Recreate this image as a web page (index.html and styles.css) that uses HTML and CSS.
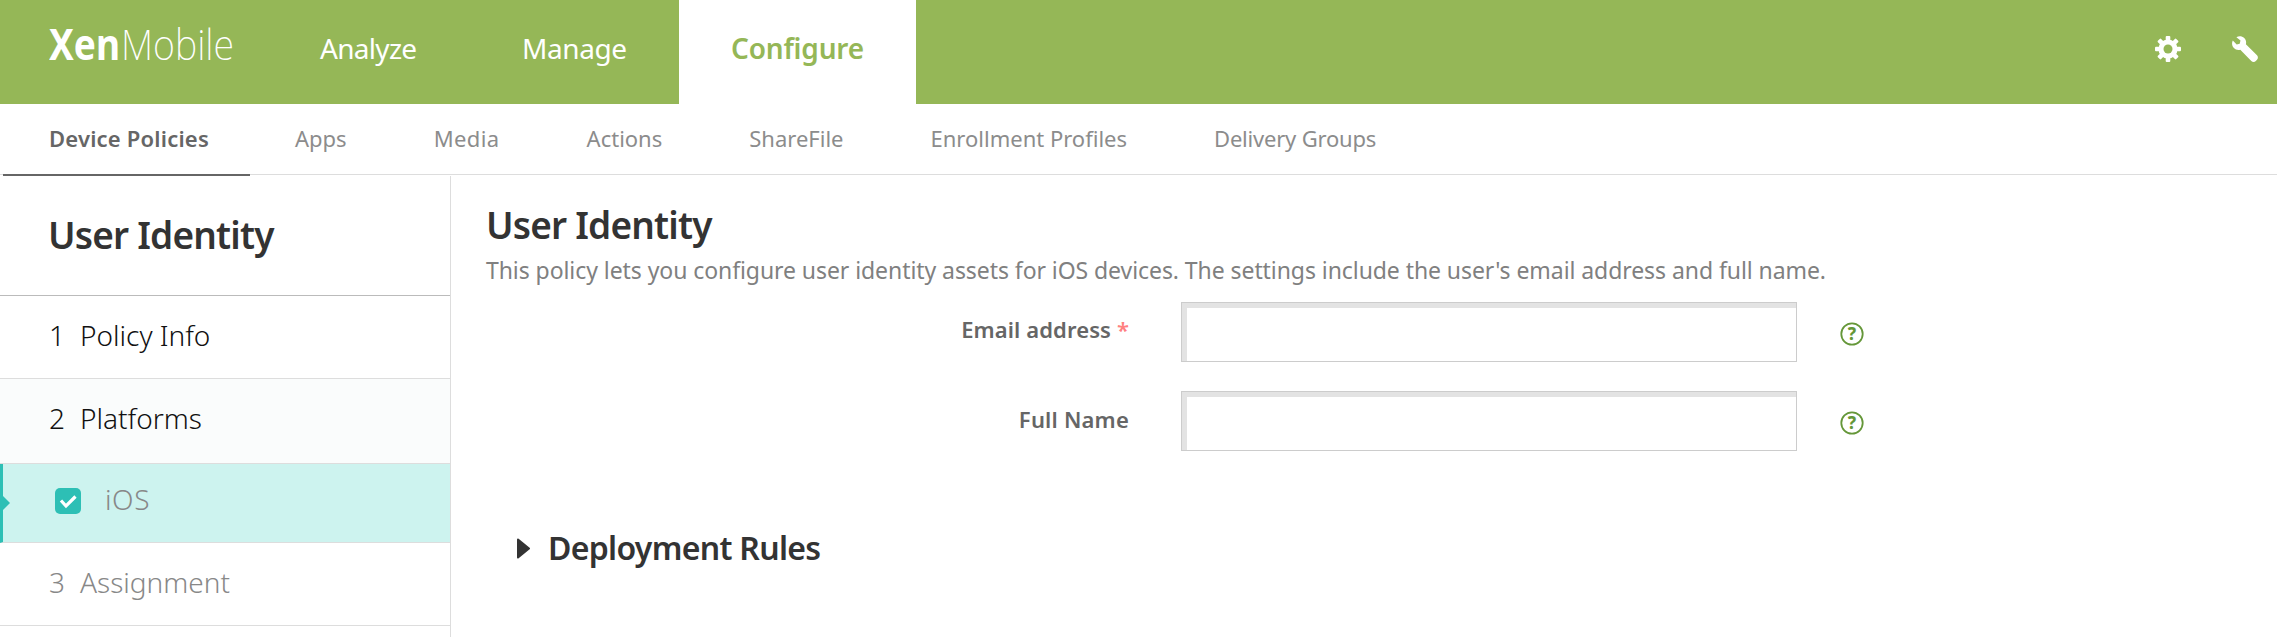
FILE: index.html
```
<!DOCTYPE html>
<html>
<head>
    <meta charset="utf-8">
    <title>XenMobile</title>
    <link rel="stylesheet" href="styles.css">
</head>
<body>
    <div class="header">
        <a href="#" class="logo">
            <svg width="210" height="84" viewBox="0 0 210 84">
                <text class="logo-bold" x="0" y="60" textLength="71" lengthAdjust="spacingAndGlyphs">Xen</text>
                <text class="logo-light" x="72" y="60" textLength="113" lengthAdjust="spacingAndGlyphs">Mobile</text>
            </svg>
        </a>
        <div class="nav">
            <a href="#" class="nav-item analyze">Analyze</a>
            <a href="#" class="nav-item manage">Manage</a>
            <a href="#" class="nav-item configure active">Configure</a>
        </div>
        <div class="tools">
            <svg width="26" height="26" viewBox="-13 -13 26 26">
                <g fill="#fff">
                    <rect x="-2.3" y="-13" width="4.6" height="26" rx="1"/>
                    <rect x="-2.3" y="-13" width="4.6" height="26" rx="1" transform="rotate(45)"/>
                    <rect x="-2.3" y="-13" width="4.6" height="26" rx="1" transform="rotate(90)"/>
                    <rect x="-2.3" y="-13" width="4.6" height="26" rx="1" transform="rotate(135)"/>
                    <circle r="9.6"/>
                </g>
                <circle r="4.5" fill="#95b757"/>
            </svg>
            <svg width="26" height="26" viewBox="0 0 26 26">
                <path fill="#fff" d="M4.400 1.200C6.600-.2 10-.2 12.200 2c1.700 1.700 2.300 4 1.700 6.200L25 19.300c1.200 1.200 1.200 3.200 0 4.500l-1.200 1.200c-1.200 1.200-3.200 1.200-4.500 0L8.300 13.700C6 14.400 3.500 13.800 1.900 12.100-.2 10-.4 6.900.8 4.500l3.900 3.900 3-.7.800-3.100z"/>
            </svg>
        </div>
    </div>

    <div class="subnav">
        <a href="#" class="subnav-item active">Device Policies</a>
        <a href="#" class="subnav-item apps">Apps</a>
        <a href="#" class="subnav-item media">Media</a>
        <a href="#" class="subnav-item">Actions</a>
        <a href="#" class="subnav-item">ShareFile</a>
        <a href="#" class="subnav-item">Enrollment Profiles</a>
        <a href="#" class="subnav-item groups">Delivery Groups</a>
    </div>

    <div class="container">
        <div class="sidebar">
            <h2 class="sidebar-title">User Identity</h2>
            <div class="step">
                <span class="step-num">1</span>
                <span class="step-name">Policy Info</span>
            </div>
            <div class="step platforms">
                <span class="step-num">2</span>
                <span class="step-name">Platforms</span>
            </div>
            <div class="platform">
                <svg class="checkbox" width="26" height="26" viewBox="0 0 26 26">
                    <rect width="26" height="26" rx="5" fill="#2dbfb5"/>
                    <path d="M6 12.500l5 5.500 9.500-9.500" fill="none" stroke="#fff" stroke-width="3.200"/>
                </svg>
                <span class="platform-name">iOS</span>
            </div>
            <div class="step pending">
                <span class="step-num">3</span>
                <span class="step-name">Assignment</span>
            </div>
        </div>

        <div class="content">
            <h1 class="content-title">User Identity</h1>
            <p class="description">This policy lets you configure user identity assets for iOS devices. The settings include the user's email address and full name.</p>

            <div class="field">
                <label class="field-label" for="email">Email address <span class="required">*</span></label>
                <input class="field-input" type="text" id="email">
                <svg class="help" width="24" height="24" viewBox="0 0 24 24">
                    <circle cx="12" cy="12" r="10.700"/>
                    <text x="12" y="18">?</text>
                </svg>
            </div>
            <div class="field">
                <label class="field-label name-label" for="fullname">Full Name</label>
                <input class="field-input" type="text" id="fullname">
                <svg class="help" width="24" height="24" viewBox="0 0 24 24">
                    <circle cx="12" cy="12" r="10.700"/>
                    <text x="12" y="18">?</text>
                </svg>
            </div>

            <div class="rules">
                <svg width="13" height="21" viewBox="0 0 13 21">
                    <path d="M1 1.500L12 10.500 1 19.500z" fill="#333" stroke="#333" stroke-width="2" stroke-linejoin="round"/>
                </svg>
                <h3 class="rules-title">Deployment Rules</h3>
            </div>
        </div>
    </div>
</body>
</html>
```
FILE: styles.css
```
* {
    box-sizing: border-box;
}
body {
    font-family: "Noto Sans", "Open Sans", sans-serif;
    margin: 0;
    height: 637px;
    overflow: hidden;
    background: #fff;
    color: #333;
}
a {
    text-decoration: none;
}
h1, h2, h3, p {
    margin: 0;
}

/* header */
.header {
    display: flex;
    height: 104px;
    background: #95b757;
}
.logo {
    width: 267px;
    padding-left: 49px;
}
.logo svg {
    display: block;
    fill: #fff;
    font-size: 43px;
}
.logo-bold {
    font-weight: 700;
}
.logo-light {
    font-weight: 200;
}
.nav {
    display: flex;
}
.nav-item {
    padding-left: 53px;
    line-height: 96px;
    font-size: 28px;
    color: #fff;
}
.analyze {
    width: 202px;
    letter-spacing: -0.7px;
}
.manage {
    width: 210px;
    letter-spacing: -0.4px;
}
.configure {
    width: 237px;
    padding-left: 52px;
    letter-spacing: -0.2px;
}
.nav-item.active {
    background: #fff;
    color: #95b757;
    font-weight: 600;
}
.tools {
    display: flex;
    align-items: center;
    gap: 51px;
    margin-left: auto;
    padding: 0 19px 6px 0;
}

/* second level menu */
.subnav {
    display: flex;
    height: 71px;
    padding-left: 3px;
    border-bottom: 1px solid #ddd;
}
.subnav-item {
    height: 72px;
    padding: 0 43px 0 44px;
    line-height: 69px;
    font-size: 22px;
    color: #8c8c8c;
}
.subnav-item.active {
    width: 247px;
    padding: 0 0 0 46px;
    border-bottom: 2px solid #666;
    color: #666;
    font-weight: 600;
    letter-spacing: 0.2px;
}
.apps {
    padding-left: 45px;
}
.media {
    letter-spacing: 0.4px;
}
.groups {
    letter-spacing: -0.2px;
}

.container {
    display: flex;
    height: 461px;
    margin-top: 1px;
}

/* sidebar */
.sidebar {
    width: 451px;
    border-right: 1px solid #ddd;
}
.sidebar-title {
    height: 120px;
    padding-left: 48px;
    border-bottom: 1px solid #bbb;
    line-height: 117px;
    font-size: 37px;
    font-weight: 600;
    letter-spacing: -0.8px;
}
.step {
    display: flex;
    height: 83px;
    padding-left: 49px;
    border-bottom: 1px solid #ddd;
    line-height: 78px;
    font-size: 28px;
    font-weight: 300;
    color: #111;
}
.step-num {
    width: 31px;
}
.platforms {
    height: 85px;
    background: #fafcfc;
}
.platform {
    position: relative;
    display: flex;
    align-items: flex-start;
    height: 79px;
    padding-left: 52px;
    border-left: 3px solid #2dbfb5;
    border-bottom: 1px solid #ddd;
    background: #cdf3ef;
    line-height: 70px;
    font-size: 28px;
    font-weight: 300;
    color: #888;
}
/* small arrow on the selected platform */
.platform::before {
    content: "";
    position: absolute;
    left: 0;
    top: 32px;
    border: 7px solid transparent;
    border-left-color: #2dbfb5;
    border-right: 0;
}
.checkbox {
    margin-top: 24px;
}
.platform-name {
    margin-left: 24px;
    letter-spacing: 0.6px;
}
.pending {
    color: #888;
}

/* policy form */
.content {
    padding: 29px 0 0 35px;
}
.content-title {
    line-height: 40px;
    font-size: 37px;
    font-weight: 600;
    letter-spacing: -0.8px;
}
.description {
    margin: 10px 0 17px;
    line-height: 30px;
    font-size: 23px;
    letter-spacing: -0.07px;
    color: #808080;
}
.field {
    display: flex;
    align-items: flex-start;
    margin-bottom: 29px;
}
.field-label {
    width: 643px;
    margin-right: 52px;
    line-height: 54px;
    font-size: 22px;
    font-weight: 600;
    letter-spacing: 0.1px;
    text-align: right;
    color: #666;
}
.name-label {
    line-height: 56px;
    letter-spacing: 0.2px;
}
.required {
    color: #ff8080;
}
.field-input {
    width: 616px;
    height: 60px;
    padding: 5px 10px 0;
    border: 1px solid #ccc;
    box-shadow: inset 5px 5px 0 #e3e3e3;
    font: inherit;
    font-size: 22px;
}
.help {
    margin: 20px 0 0 43px;
}
.help circle {
    fill: none;
    stroke: #659739;
    stroke-width: 1.8;
}
.help text {
    fill: #659739;
    font-size: 17px;
    font-weight: 800;
    text-anchor: middle;
}
.rules {
    display: flex;
    align-items: center;
    gap: 18px;
    margin-top: 75px;
    padding-left: 31px;
}
.rules-title {
    line-height: 44px;
    font-size: 32px;
    font-weight: 600;
    letter-spacing: -0.7px;
}
```
